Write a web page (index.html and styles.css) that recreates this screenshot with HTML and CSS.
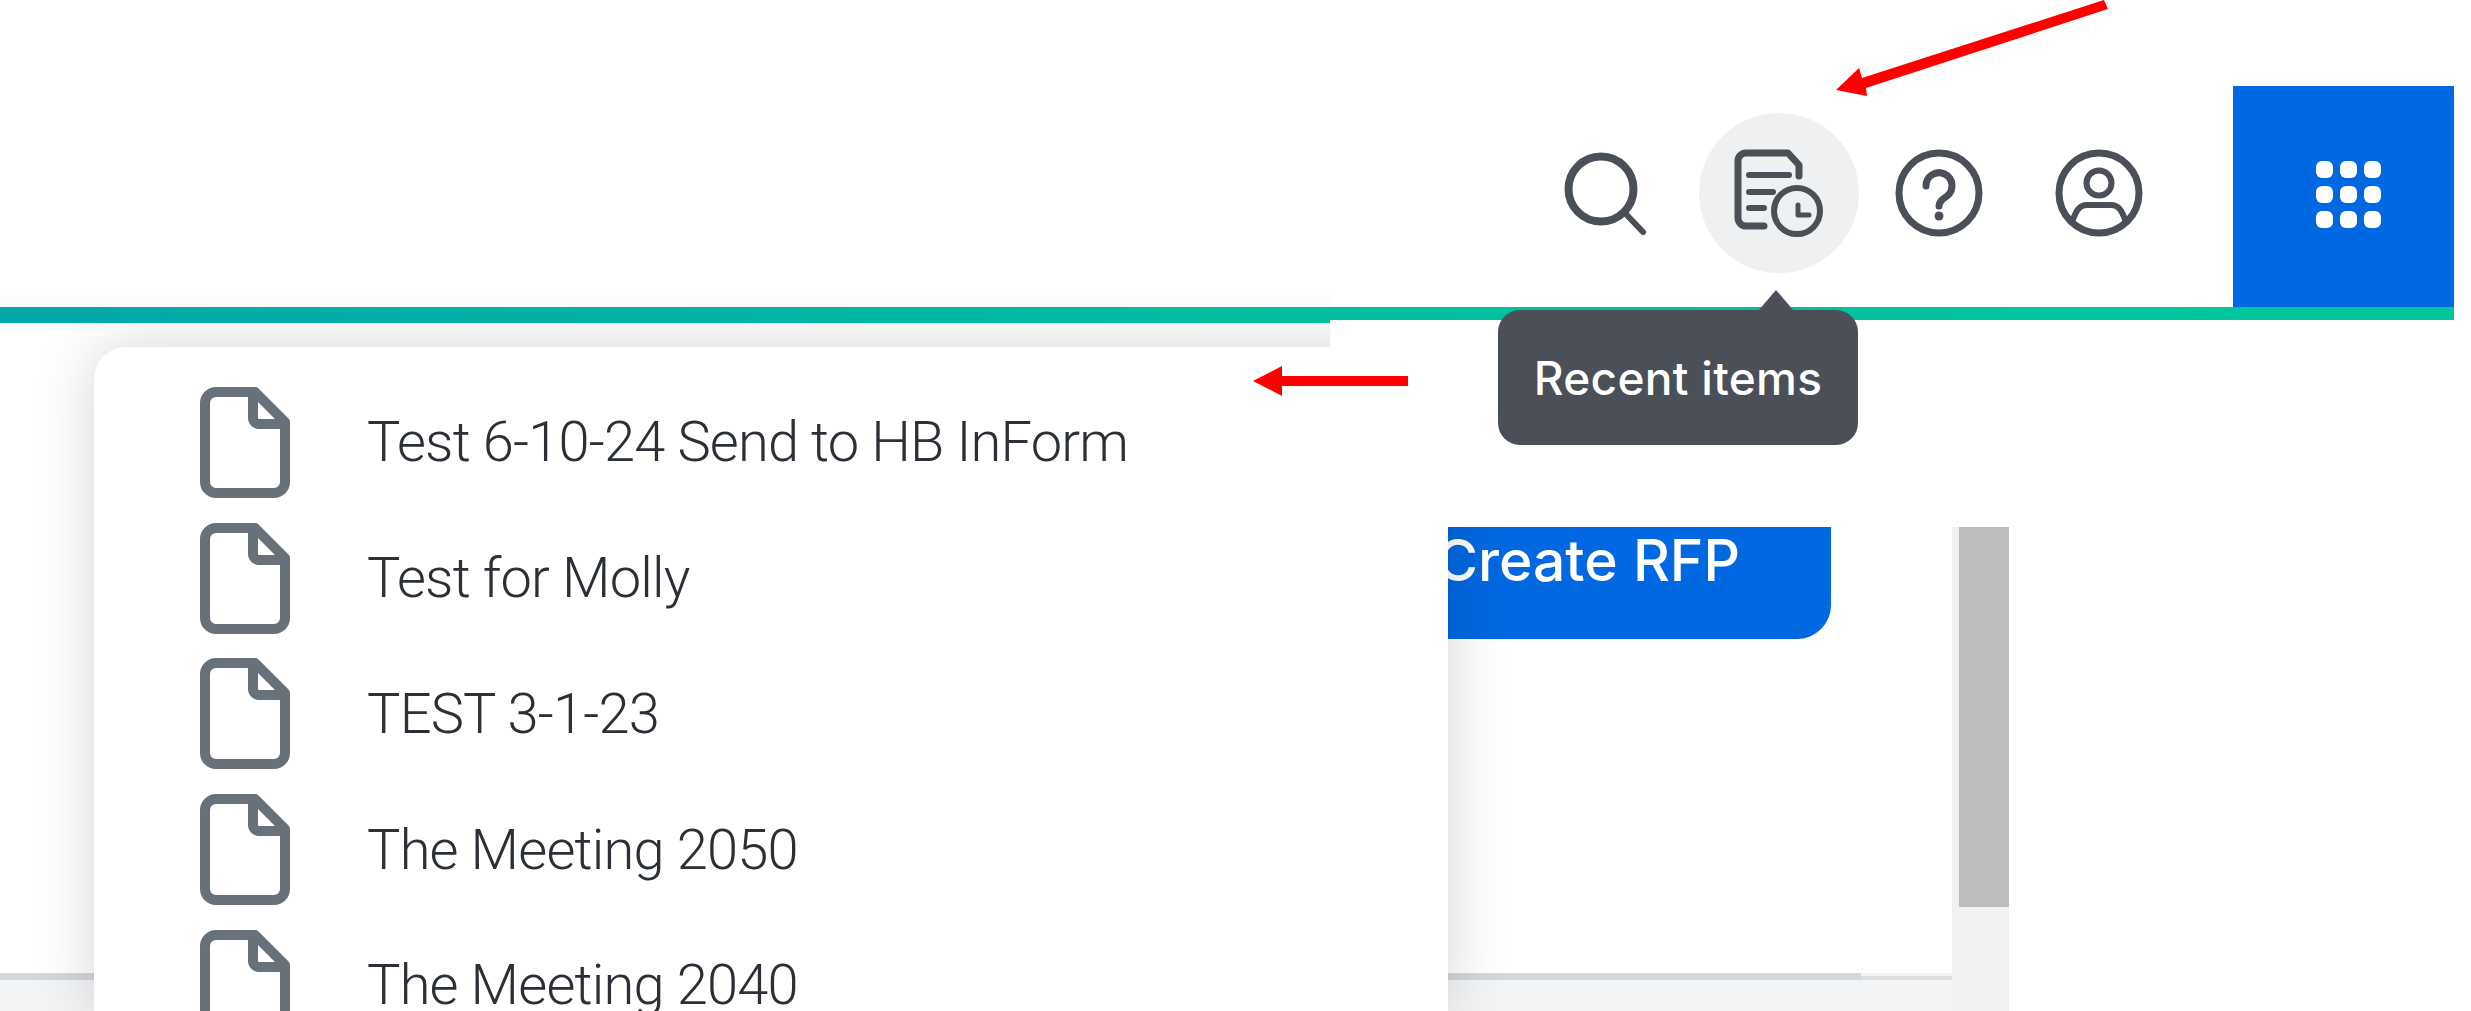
FILE: index.html
```html
<!DOCTYPE html>
<html lang="en">
<head>
<meta charset="utf-8">
<title>Recent items</title>
<link rel="stylesheet" href="styles.css">
</head>
<body>
<svg class="defs" width="0" height="0" aria-hidden="true">
  <symbol id="doc" viewBox="0 0 90 111">
    <path d="M16 5H55L85 35V95a11 11 0 0 1-11 11H16A11 11 0 0 1 5 95V16A11 11 0 0 1 16 5Z"/>
    <path d="M53 5V31a6 6 0 0 0 6 6H85"/>
  </symbol>
</svg>

<header class="topbar">
  <nav class="tools">
    <button class="tool tool-search" aria-label="Search">
      <svg class="icon" viewBox="0 0 160 160"><circle cx="76" cy="76" r="32.5" stroke-width="8"/><path d="M99 99L118 119" stroke-width="6"/></svg>
    </button>
    <button class="tool tool-active" aria-label="Recent items">
      <svg class="icon" viewBox="0 0 160 160">
        <path d="M65 113H47a8 8 0 0 1-8-8V48a8 8 0 0 1 8-8H89L100 52V63" stroke-width="7"/>
        <path d="M50 62H90M50 79H74M50 95H65" stroke-width="6"/>
        <circle cx="98" cy="98" r="23" stroke-width="6"/>
        <path d="M99 92V102H110" stroke-width="5"/>
      </svg>
    </button>
    <button class="tool" aria-label="Help">
      <svg class="icon" viewBox="0 0 160 160">
        <circle cx="80" cy="80" r="40" stroke-width="7"/>
        <path d="M67 73a13 13 0 1 1 21 10c-5 3.5-8 6-8 10" stroke-width="7"/>
        <circle class="solid" cx="80" cy="103" r="4.5"/>
      </svg>
    </button>
    <button class="tool" aria-label="Profile">
      <svg class="icon" viewBox="0 0 160 160">
        <circle cx="80" cy="80" r="40" stroke-width="7"/>
        <circle cx="80" cy="70" r="12.5" stroke-width="6"/>
        <path d="M53 109C57 98 60 92 68 92H92C100 92 103 98 107 109" stroke-width="6"/>
      </svg>
    </button>
  </nav>
  <div class="apps" aria-label="Apps">
    <div class="apps-grid">
      <span></span><span></span><span></span>
      <span></span><span></span><span></span>
      <span></span><span></span><span></span>
    </div>
  </div>
</header>

<div class="accent">
  <div class="accent-left"></div>
  <div class="accent-right"></div>
</div>

<div class="content">
  <main class="main">
    <div class="button-row"><a class="create">Create RFP</a></div>
    <div class="footer"></div>
  </main>
  <div class="scrollbar"><div class="thumb"></div></div>
</div>

<div class="shade-top"></div>

<section class="menu">
  <ul class="menu-list">
    <li class="menu-row"><svg class="doc"><use href="#doc"/></svg><span class="menu-label">Test 6-10-24 Send to HB InForm</span></li>
    <li class="menu-row"><svg class="doc"><use href="#doc"/></svg><span class="menu-label">Test for Molly</span></li>
    <li class="menu-row"><svg class="doc"><use href="#doc"/></svg><span class="menu-label">TEST 3-1-23</span></li>
    <li class="menu-row"><svg class="doc"><use href="#doc"/></svg><span class="menu-label">The Meeting 2050</span></li>
    <li class="menu-row"><svg class="doc"><use href="#doc"/></svg><span class="menu-label">The Meeting 2040</span></li>
  </ul>
</section>

<div class="tooltip"><span class="tooltip-text">Recent items</span></div>

<svg class="arrows" viewBox="0 0 2471 1011" aria-hidden="true">
  <polygon points="1836,90 1859,68 1862,78 2104,0 2108,9 1866,88 1867,96"/>
  <polygon points="1253,381 1282,366 1282,376 1408,376 1408,386 1282,386 1282,396"/>
</svg>
</body>
</html>
```
FILE: styles.css
```css
* { box-sizing: border-box; }
html, body { margin: 0; padding: 0; }
body {
  position: relative;
  width: 2471px;
  height: 1011px;
  overflow: hidden;
  background: #fff;
  font-family: Inter, "Liberation Sans", sans-serif;
  display: flex;
  flex-direction: column;
}
.defs { position: absolute; }

/* top bar */
.topbar {
  height: 307px;
  display: flex;
  justify-content: flex-end;
  padding-right: 17px;
  flex: none;
}
.tools {
  display: flex;
  align-items: flex-start;
  padding-top: 113px;
  margin-right: 54px;
}
.tool {
  width: 160px;
  height: 160px;
  padding: 0;
  border: 0;
  background: none;
  border-radius: 50%;
  display: block;
}
.tool-search { margin-right: 14px; }
.tool-active { background: #eff0f2; }
.icon {
  display: block;
  width: 160px;
  height: 160px;
  fill: none;
  stroke: #4a4f58;
  stroke-linecap: round;
  stroke-linejoin: round;
}
.icon .solid { fill: #4a4f58; stroke: none; }
.apps {
  width: 221px;
  height: 221px;
  align-self: flex-end;
  background: #0068e0;
  padding: 75px 0 0 83px;
}
.apps-grid {
  display: grid;
  grid-template-columns: repeat(3, 17px);
  grid-auto-rows: 17px;
  gap: 8px 7px;
}
.apps-grid span { background: #fff; border-radius: 6px; }

/* accent line */
.accent {
  flex: none;
  height: 16px;
  display: flex;
  align-items: flex-start;
  margin-right: 17px;
}
.accent-left {
  width: 1330px;
  height: 16px;
  background: linear-gradient(90deg, #00a8a8, #00bfa0);
}
.accent-right {
  flex: 1;
  height: 13px;
  background: linear-gradient(90deg, #00bfa0, #00c89b);
}

/* page under the bar */
.content {
  flex: 1;
  display: flex;
  min-height: 0;
}
.main {
  width: 1952px;
  display: flex;
  flex-direction: column;
  justify-content: space-between;
}
.button-row {
  padding-top: 204px;
  display: flex;
  justify-content: flex-end;
  padding-right: 121px;
}
.create {
  width: 560px;
  height: 112px;
  background: #0068e0;
  color: #fff;
  font-size: 57px;
  font-weight: 500;
  line-height: 60px;
  padding: 4px 91px 0 0;
  text-align: right;
  border-bottom-right-radius: 34px;
  white-space: nowrap;
}
.footer {
  height: 38px;
  background:
    linear-gradient(#d4d7da, #d4d7da) 0 0 / 1861px 7px no-repeat,
    linear-gradient(#dcdee0, #dcdee0) 0 3px / 100% 4px no-repeat,
    #f3f4f6;
}
.scrollbar {
  width: 57px;
  margin-top: 204px;
  background: #f1f1f1;
  padding-left: 7px;
}
.thumb {
  height: 380px;
  background: #bdbdbd;
}

/* menu */
.menu {
  position: absolute;
  left: 94px;
  top: 347px;
  width: 1354px;
  height: 664px;
  background: #fff;
  border-radius: 32px 0 0 0;
  box-shadow: 0 0 60px rgba(0, 0, 0, .17);
  clip-path: polygon(-94px -24px, 1236px -24px, 1236px 0, 1354px 0, 1354px 180px, 1454px 180px, 1454px 664px, -94px 664px);
}
.menu-list {
  list-style: none;
  margin: 0;
  padding: 27.6px 0 0 106px;
  height: 664px;
  overflow: hidden;
}
.menu-row {
  height: 135.7px;
  display: flex;
  align-items: center;
  gap: 77px;
}
.doc {
  width: 90px;
  height: 111px;
  flex: none;
  fill: none;
  stroke: #68717a;
  stroke-width: 10;
  stroke-linejoin: round;
}
.menu-label {
  font-family: Roboto, "Liberation Sans", sans-serif;
  font-weight: 300;
  font-size: 56px;
  letter-spacing: -0.8px;
  color: #2b2f36;
  white-space: nowrap;
}

.shade-top {
  position: absolute;
  left: 0;
  top: 291px;
  width: 1330px;
  height: 16px;
  background: linear-gradient(180deg, #fff, #fbfbfb);
}

/* tooltip */
.tooltip {
  position: absolute;
  left: 1498px;
  top: 310px;
  width: 360px;
  height: 135px;
  background: #4a4f58;
  border-radius: 22px;
  display: flex;
  align-items: center;
  justify-content: center;
}
.tooltip::before {
  content: "";
  position: absolute;
  left: 260px;
  top: -20px;
  border-left: 18px solid transparent;
  border-right: 18px solid transparent;
  border-bottom: 21px solid #4a4f58;
}
.tooltip-text {
  color: #fff;
  font-size: 46px;
  font-weight: 500;
  letter-spacing: 0.3px;
  white-space: nowrap;
}

/* annotation arrows */
.arrows {
  position: absolute;
  left: 0;
  top: 0;
  width: 2471px;
  height: 1011px;
  fill: #ff0000;
  pointer-events: none;
}
```
